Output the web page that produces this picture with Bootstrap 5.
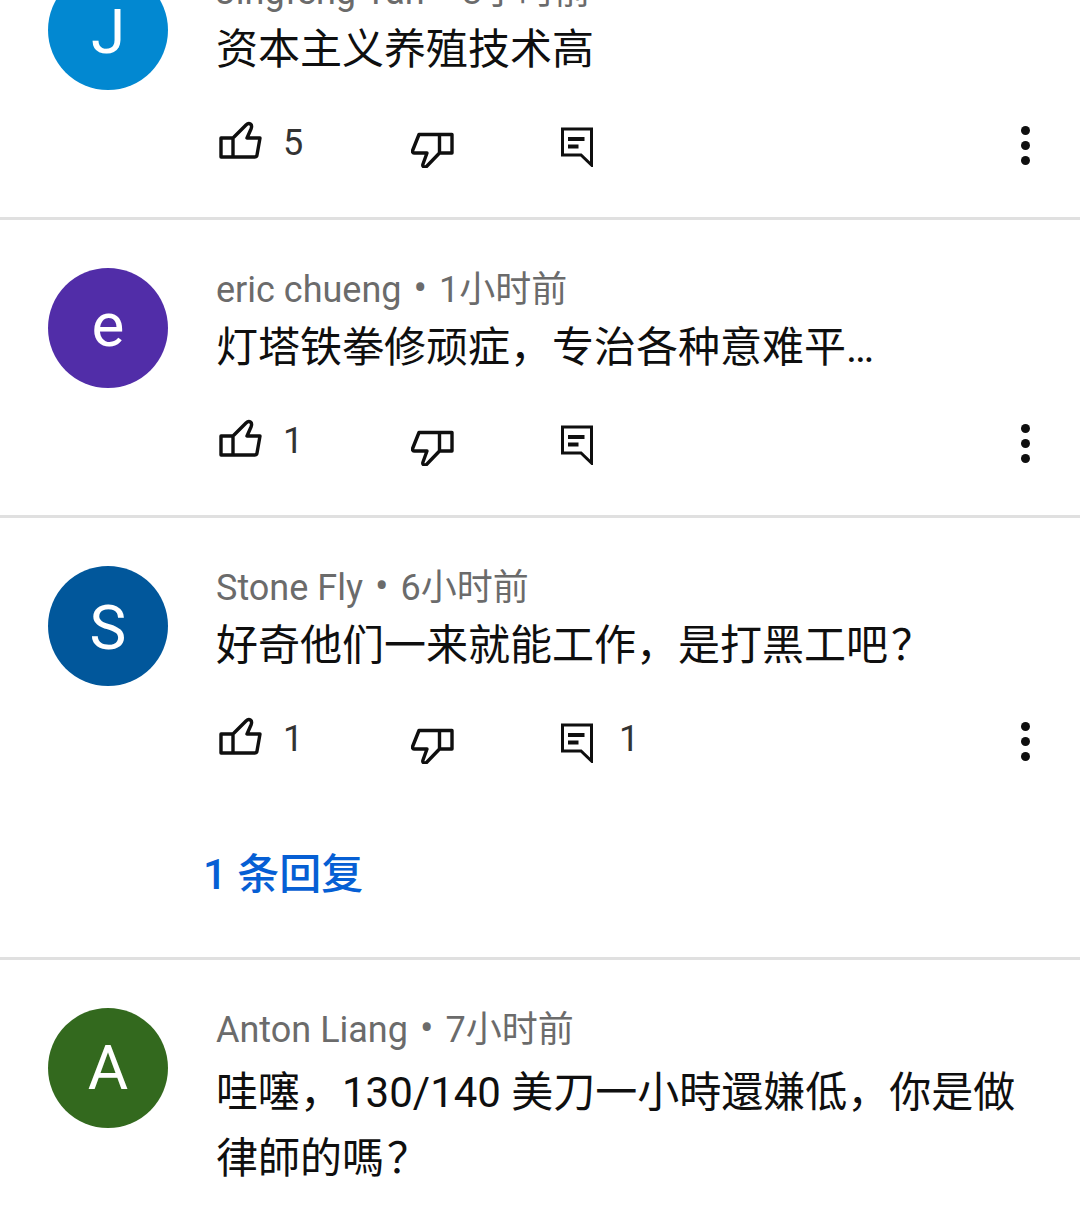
<!DOCTYPE html>
<html lang="zh">
<head>
  <meta charset="UTF-8" />
  <meta name="viewport" content="width=device-width, initial-scale=1" />
  <title>评论</title>
  <link href="https://cdn.jsdelivr.net/npm/bootstrap@5.3.0/dist/css/bootstrap.min.css" rel="stylesheet" />
  <style>
    body { font-family: Roboto, "Noto Sans CJK SC", sans-serif; color: #0f0f0f; background: #fff; overflow: hidden; }
    .comment-list { margin-top: -78px; }
    .comment-item { border-bottom: 3px solid #e0e0e0; padding: 48px 49px 48px 48px; }
    .avatar { width: 120px; height: 120px; font-size: 62px; line-height: 1; color: #fff; flex-shrink: 0; }
    .avatar-low { padding-top: 3px; }
    .avatar-high { padding-bottom: 6px; }
    .comment-body { margin-left: 49px; min-width: 0; margin-top: -1px; }
    .comment-meta { font-size: 36px; line-height: 44px; color: #6b6b6b; white-space: nowrap; margin-left: -1px; }
    .meta-dot { font-size: 40px; margin: 0 12px; }
    .comment-text { font-size: 42px; line-height: 66px; margin-top: 3px; margin-left: -1px; }
    .comment-text-long { margin-top: 8px; }
    .q-mark { margin-left: 3px; }
    .actions { height: 52px; margin-top: 34px; font-size: 36px; color: #333; }
    .actions svg { display: block; }
    .act-like { width: 194px; padding-left: 1px; }
    .act-like svg { margin-top: 4px; }
    .act-dislike { width: 148px; padding-top: 3px; }
    .act-reply { padding-top: 2px; }
    .act-count { margin-left: 19px; margin-top: 6px; line-height: 40px; }
    .act-count-reply { margin-left: 24px; margin-top: 4px; }
    .reply-link { color: #065fd4; font-size: 42px; font-weight: 500; margin: 86px 0 10px -14px; line-height: 48px; }
    .dots { width: 10px; padding-top: 9px; }
    .dots span { width: 9px; height: 9px; background: #0f0f0f; border-radius: 50%; display: block; margin-bottom: 6px; }
  </style>
</head>
<body>
  <div class="comment-list">

    <div class="comment-item d-flex">
      <div class="avatar avatar-low rounded-circle d-flex align-items-center justify-content-center" style="background:#0288d1">J</div>
      <div class="comment-body flex-grow-1">
        <div class="comment-meta">Jingfeng Yan<span class="meta-dot">•</span>3小时前</div>
        <div class="comment-text">资本主义养殖技术高</div>
        <div class="actions d-flex align-items-start">
          <div class="act-like d-flex">
            <svg width="46" height="42" viewBox="0 0 46 42" fill="none" stroke="#0f0f0f" stroke-width="3.4" stroke-linejoin="round"><path d="M3 17H15V36H3ZM15 17 28 4C31 1 35 3 33 8L29 17H42L39 34C39 35 38 36 36 36H15"/></svg>
            <span class="act-count">5</span>
          </div>
          <div class="act-dislike">
            <svg width="46" height="48" viewBox="0 0 46 48" fill="none" stroke="#0f0f0f" stroke-width="3.4" stroke-linejoin="round"><path d="M41 14.5H28.5V33H41ZM28.5 14.5H8L1.8 30C1 32 2 33 3.5 33H16L12 44C11 47 14 48 16 46L28.5 33"/></svg>
          </div>
          <div class="act-reply flex-grow-1">
            <svg width="36" height="48" viewBox="0 0 36 48" fill="none" stroke="#0f0f0f" stroke-width="3"><path d="M3.5 10H32.5V46L22 36H3.5Z"/><path d="M9 20H25.5M9 27.5H19.5" stroke-width="4"/></svg>
          </div>
          <div class="dots"><span></span><span></span><span></span></div>
        </div>
      </div>
    </div>

    <div class="comment-item d-flex">
      <div class="avatar avatar-high rounded-circle d-flex align-items-center justify-content-center" style="background:#512da8">e</div>
      <div class="comment-body flex-grow-1">
        <div class="comment-meta">eric chueng<span class="meta-dot">•</span>1小时前</div>
        <div class="comment-text">灯塔铁拳修顽症，专治各种意难平…</div>
        <div class="actions d-flex align-items-start">
          <div class="act-like d-flex">
            <svg width="46" height="42" viewBox="0 0 46 42" fill="none" stroke="#0f0f0f" stroke-width="3.4" stroke-linejoin="round"><path d="M3 17H15V36H3ZM15 17 28 4C31 1 35 3 33 8L29 17H42L39 34C39 35 38 36 36 36H15"/></svg>
            <span class="act-count">1</span>
          </div>
          <div class="act-dislike">
            <svg width="46" height="48" viewBox="0 0 46 48" fill="none" stroke="#0f0f0f" stroke-width="3.4" stroke-linejoin="round"><path d="M41 14.5H28.5V33H41ZM28.5 14.5H8L1.8 30C1 32 2 33 3.5 33H16L12 44C11 47 14 48 16 46L28.5 33"/></svg>
          </div>
          <div class="act-reply flex-grow-1">
            <svg width="36" height="48" viewBox="0 0 36 48" fill="none" stroke="#0f0f0f" stroke-width="3"><path d="M3.5 10H32.5V46L22 36H3.5Z"/><path d="M9 20H25.5M9 27.5H19.5" stroke-width="4"/></svg>
          </div>
          <div class="dots"><span></span><span></span><span></span></div>
        </div>
      </div>
    </div>

    <div class="comment-item d-flex">
      <div class="avatar avatar-low rounded-circle d-flex align-items-center justify-content-center" style="background:#01579b">S</div>
      <div class="comment-body flex-grow-1">
        <div class="comment-meta">Stone Fly<span class="meta-dot">•</span>6小时前</div>
        <div class="comment-text">好奇他们一来就能工作，是打黑工吧<span class="q-mark">？</span></div>
        <div class="actions d-flex align-items-start">
          <div class="act-like d-flex">
            <svg width="46" height="42" viewBox="0 0 46 42" fill="none" stroke="#0f0f0f" stroke-width="3.4" stroke-linejoin="round"><path d="M3 17H15V36H3ZM15 17 28 4C31 1 35 3 33 8L29 17H42L39 34C39 35 38 36 36 36H15"/></svg>
            <span class="act-count">1</span>
          </div>
          <div class="act-dislike">
            <svg width="46" height="48" viewBox="0 0 46 48" fill="none" stroke="#0f0f0f" stroke-width="3.4" stroke-linejoin="round"><path d="M41 14.5H28.5V33H41ZM28.5 14.5H8L1.8 30C1 32 2 33 3.5 33H16L12 44C11 47 14 48 16 46L28.5 33"/></svg>
          </div>
          <div class="act-reply flex-grow-1 d-flex">
            <svg width="36" height="48" viewBox="0 0 36 48" fill="none" stroke="#0f0f0f" stroke-width="3"><path d="M3.5 10H32.5V46L22 36H3.5Z"/><path d="M9 20H25.5M9 27.5H19.5" stroke-width="4"/></svg>
            <span class="act-count act-count-reply">1</span>
          </div>
          <div class="dots"><span></span><span></span><span></span></div>
        </div>
        <div class="reply-link">1 条回复</div>
      </div>
    </div>

    <div class="comment-item d-flex">
      <div class="avatar rounded-circle d-flex align-items-center justify-content-center" style="background:#33691e">A</div>
      <div class="comment-body flex-grow-1">
        <div class="comment-meta">Anton Liang<span class="meta-dot">•</span>7小时前</div>
        <div class="comment-text comment-text-long">哇噻，130/140 美刀一小時還嫌低，你是做律師的嗎<span class="q-mark">？</span></div>
      </div>
    </div>

  </div>
</body>
</html>
